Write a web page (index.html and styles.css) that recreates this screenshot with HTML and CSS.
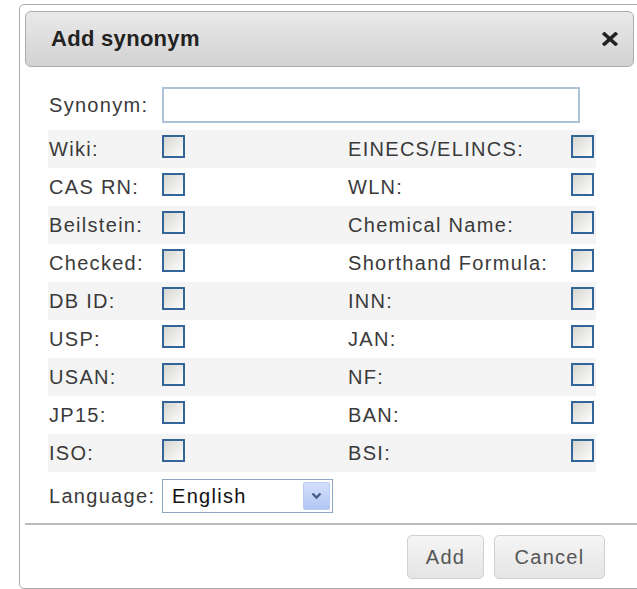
FILE: index.html
```html
<!DOCTYPE html>
<html lang="en">
<head>
<meta charset="utf-8">
<title>Add synonym</title>
<link rel="stylesheet" href="styles.css">
</head>
<body>
<div class="dialog">
  <div class="titlebar">
    <span class="title">Add synonym</span>
    <span class="close">
      <svg width="16" height="14" viewBox="0 0 16 14"><path d="M2.5 2 L13.5 12 M13.5 2 L2.5 12" stroke="#222" stroke-width="3.6" stroke-linecap="square" fill="none"/></svg>
    </span>
  </div>
  <div class="content">
    <div class="syn-row">
      <label class="lbl">Synonym:</label>
      <input class="text" type="text">
    </div>
    <div class="flags">
      <div class="row alt"><span class="lbl">Wiki:</span><input class="cb" type="checkbox"><span class="lbl r">EINECS/ELINCS:</span><input class="cb" type="checkbox"></div>
      <div class="row"><span class="lbl">CAS RN:</span><input class="cb" type="checkbox"><span class="lbl r">WLN:</span><input class="cb" type="checkbox"></div>
      <div class="row alt"><span class="lbl">Beilstein:</span><input class="cb" type="checkbox"><span class="lbl r">Chemical Name:</span><input class="cb" type="checkbox"></div>
      <div class="row"><span class="lbl">Checked:</span><input class="cb" type="checkbox"><span class="lbl r">Shorthand Formula:</span><input class="cb" type="checkbox"></div>
      <div class="row alt"><span class="lbl">DB ID:</span><input class="cb" type="checkbox"><span class="lbl r">INN:</span><input class="cb" type="checkbox"></div>
      <div class="row"><span class="lbl">USP:</span><input class="cb" type="checkbox"><span class="lbl r">JAN:</span><input class="cb" type="checkbox"></div>
      <div class="row alt"><span class="lbl">USAN:</span><input class="cb" type="checkbox"><span class="lbl r">NF:</span><input class="cb" type="checkbox"></div>
      <div class="row"><span class="lbl">JP15:</span><input class="cb" type="checkbox"><span class="lbl r">BAN:</span><input class="cb" type="checkbox"></div>
      <div class="row alt"><span class="lbl">ISO:</span><input class="cb" type="checkbox"><span class="lbl r">BSI:</span><input class="cb" type="checkbox"></div>
    </div>
    <div class="lang-row">
      <label class="lbl">Language:</label>
      <div class="select">
        <span class="select-value">English</span>
        <span class="arrow">
          <svg width="11" height="8" viewBox="0 0 11 8"><path d="M1.5 1.5 L5.5 5.5 L9.5 1.5" stroke="#4a5d86" stroke-width="2.4" fill="none"/></svg>
        </span>
      </div>
    </div>
  </div>
  <div class="buttonpane">
    <button class="btn btn-add" type="button">Add</button>
    <button class="btn btn-cancel" type="button">Cancel</button>
  </div>
</div>
</body>
</html>
```
FILE: styles.css
```css
* {
  box-sizing: border-box;
}

html,
body {
  margin: 0;
}

body {
  width: 637px;
  height: 589px;
  overflow: hidden;
  background: #fff;
  font-family: "Liberation Sans", Arial, sans-serif;
  font-size: 20px;
  letter-spacing: 1.3px;
  color: #3a3a3a;
}

/* dialog frame, wider than the window so its right edge is cut off */
.dialog {
  margin: 4px 0 0 19px;
  width: 626px;
  height: 585px;
  border: 1px solid #a9a9a9;
  border-radius: 5px;
  padding: 6px 10px 0 5px;
  display: flex;
  flex-direction: column;
}

.titlebar {
  height: 56px;
  border: 1px solid #adadad;
  border-radius: 6px;
  background: linear-gradient(#e9e9e9, #d2d2d2);
  display: flex;
  align-items: center;
  padding: 0 15px 0 25px;
}

.title {
  font-weight: bold;
  font-size: 22px;
  letter-spacing: 0.3px;
  color: #222;
}

.close {
  margin-left: auto;
  display: flex;
}

/* form body */
.content {
  margin-left: 23px;
  width: 548px;
  padding-top: 17px;
}

.syn-row {
  display: flex;
  align-items: center;
  height: 42px;
  margin-bottom: 4px;
}

.syn-row .lbl,
.lang-row .lbl {
  width: 114px;
}

.lbl {
  padding-left: 1px;
  white-space: nowrap;
}

.lbl.r {
  padding-left: 2px;
}

.text {
  width: 418px;
  height: 36px;
  border: 2px solid #aec3da;
  margin: 0;
  background: #fff;
}

.row {
  display: grid;
  grid-template-columns: 114px 184px 225px 25px;
  align-items: center;
  height: 38px;
}

.row.alt {
  background: #f4f4f4;
}

.cb {
  -webkit-appearance: none;
  appearance: none;
  margin: 0 0 6px 0;
  width: 23px;
  height: 23px;
  border: 2px solid #33649a;
  background: linear-gradient(135deg, #d6d6d0, #fdfdfd);
}

.lang-row {
  display: flex;
  align-items: center;
  height: 44px;
  margin-top: 2px;
}

.select {
  width: 171px;
  height: 34px;
  border: 1px solid #8aa6c4;
  display: flex;
  align-items: center;
  padding: 2px;
  color: #111;
}

.select-value {
  padding-left: 7px;
}

.arrow {
  margin-left: auto;
  width: 27px;
  height: 28px;
  border: 1px solid #b8caf2;
  border-radius: 2px;
  background: linear-gradient(#d3e0fb, #b2c6f3);
  display: flex;
  align-items: center;
  justify-content: center;
}

/* footer with actions; its rule runs on to the dialog's right edge */
.buttonpane {
  margin-top: 5px;
  margin-right: -10px;
  border-top: 2px solid #bdbdbd;
  padding: 10px 39px 0 0;
  display: flex;
  justify-content: flex-end;
  gap: 10px;
}

.btn {
  height: 44px;
  padding: 0;
  border: 1px solid #d0d0d0;
  border-radius: 5px;
  background: linear-gradient(#f5f5f5, #e5e5e5);
  font-family: "Liberation Sans", Arial, sans-serif;
  font-size: 20px;
  letter-spacing: 1.3px;
  color: #555;
}

.btn-add {
  width: 77px;
}

.btn-cancel {
  width: 111px;
}
```
